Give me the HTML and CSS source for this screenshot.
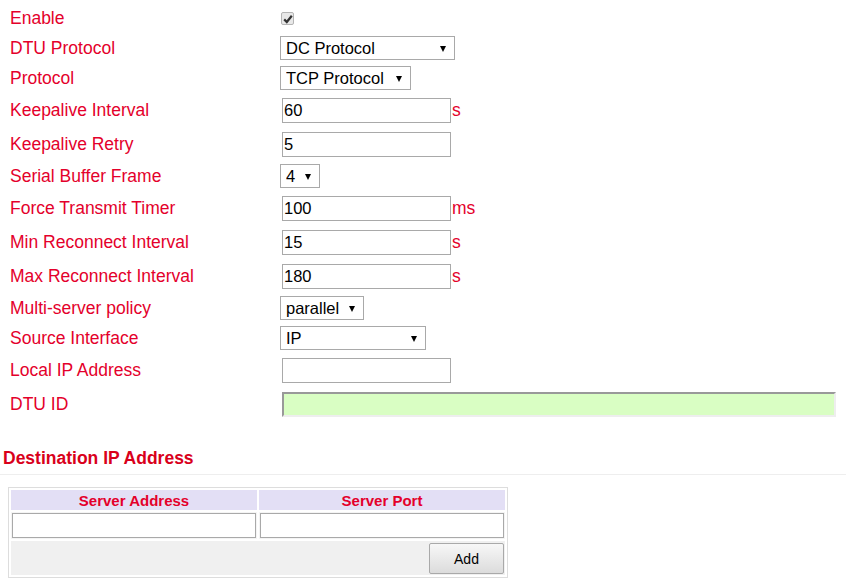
FILE: index.html
```html
<!DOCTYPE html>
<html lang="en">
<head>
  <meta charset="UTF-8" />
  <title>DTU Settings</title>
  <link rel="stylesheet" href="styles.css">
</head>
<body>
  <div class="form">
    <div class="row">
      <label>Enable</label>
      <span class="check">
        <svg width="10" height="10" viewBox="0 0 10 10"><path d="M1.2 5.4 L3.8 8 L8.8 1.8" fill="none" stroke="#333" stroke-width="2.2"/></svg>
      </span>
    </div>
    <div class="row">
      <label>DTU Protocol</label>
      <span class="select w-dtu"><select><option>DC Protocol</option></select></span>
    </div>
    <div class="row">
      <label>Protocol</label>
      <span class="select w-proto"><select><option>TCP Protocol</option></select></span>
    </div>
    <div class="row tall">
      <label>Keepalive Interval</label>
      <input type="text" value="60"><span class="unit">s</span>
    </div>
    <div class="row tall">
      <label>Keepalive Retry</label>
      <input type="text" value="5">
    </div>
    <div class="row">
      <label>Serial Buffer Frame</label>
      <span class="select w-frame"><select><option>4</option></select></span>
    </div>
    <div class="row tall">
      <label>Force Transmit Timer</label>
      <input type="text" value="100"><span class="unit">ms</span>
    </div>
    <div class="row tall">
      <label>Min Reconnect Interval</label>
      <input type="text" value="15"><span class="unit">s</span>
    </div>
    <div class="row tall">
      <label>Max Reconnect Interval</label>
      <input type="text" value="180"><span class="unit">s</span>
    </div>
    <div class="row">
      <label>Multi-server policy</label>
      <span class="select w-policy"><select><option>parallel</option></select></span>
    </div>
    <div class="row">
      <label>Source Interface</label>
      <span class="select w-iface"><select><option>IP</option></select></span>
    </div>
    <div class="row tall">
      <label>Local IP Address</label>
      <input type="text" value="">
    </div>
    <div class="row tall">
      <label>DTU ID</label>
      <input type="text" class="dtu-id" value="">
    </div>
  </div>

  <h3 class="section">Destination IP Address</h3>

  <table class="servers">
    <tr>
      <th>Server Address</th>
      <th>Server Port</th>
    </tr>
    <tr>
      <td><input type="text" class="cell-input"></td>
      <td><input type="text" class="cell-input"></td>
    </tr>
    <tr>
      <td colspan="2" class="actions"><button>Add</button></td>
    </tr>
  </table>
</body>
</html>
```

FILE: styles.css
```css
* {
  box-sizing: border-box;
}
body {
  margin: 0;
  font-family: 'Liberation Sans', Arial, sans-serif;
  font-size: 16px;
  background: #fff;
  color: #000;
}
.form {
  padding: 3px 0 0 10px;
}
.row {
  display: flex;
  align-items: center;
  height: 30px;
}
.row.tall {
  height: 34px;
}
.row label {
  width: 270px;
  flex: none;
  font-size: 17.5px;
  color: #e4002b;
}
.check {
  width: 13px;
  height: 13px;
  margin: 1px 0 0 1px;
  border: 1px solid #b4b4b4;
  border-radius: 2px;
  background: #e8e8e8;
  display: flex;
  align-items: center;
  justify-content: center;
}
.check svg {
  display: block;
}
.select {
  position: relative;
  display: inline-block;
  height: 24px;
}
.select select {
  appearance: none;
  -webkit-appearance: none;
  width: 100%;
  height: 24px;
  border: 1px solid #a9a9a9;
  border-radius: 0;
  background: #fff;
  font-family: inherit;
  font-size: 16.5px;
  color: #000;
  padding: 0 0 0 5px;
  margin: 0;
}
.select::after {
  content: "";
  position: absolute;
  right: 9px;
  top: 10px;
  border-left: 3px solid transparent;
  border-right: 3px solid transparent;
  border-top: 6px solid #000;
  pointer-events: none;
}
.w-dtu { width: 175px; }
.w-proto { width: 131px; }
.w-frame { width: 40px; }
.w-policy { width: 84px; }
.w-iface { width: 146px; }
.row input[type="text"] {
  width: 169px;
  height: 25px;
  margin: 0 0 0 2px;
  padding: 0 1px;
  border: 1px solid #a9a9a9;
  font-family: inherit;
  font-size: 16.5px;
  color: #000;
  outline: none;
}
.unit {
  color: #e4002b;
  font-size: 17.5px;
  margin-left: 1px;
}
.row input.dtu-id {
  width: 554px;
  border: 2px solid;
  border-color: #999 #eee #eee #999;
  background: #d9fec3;
}
.section {
  margin: 26px 0 0;
  padding: 0 0 5px 3px;
  font-size: 17.5px;
  line-height: 22px;
  color: #d9001b;
  border-bottom: 1px solid #eee;
}
.servers {
  margin: 12px 0 0 8px;
  width: 500px;
  border: 1px solid #ddd;
  border-spacing: 2px;
}
.servers th {
  height: 20px;
  padding: 0;
  background: #e3dff5;
  color: #e4002b;
  font-size: 15px;
  font-weight: bold;
  text-align: center;
}
.servers td {
  padding: 1px;
  background: #f4f4f4;
}
.cell-input {
  display: block;
  width: 100%;
  height: 25px;
  border: 1px solid #a9a9a9;
  font-family: inherit;
  font-size: 16px;
}
.servers td.actions {
  text-align: right;
  padding: 2px 1px 1px 2px;
  background: #f0f0f0;
}
.actions button {
  width: 75px;
  height: 31px;
  border: 1px solid #a9a9a9;
  border-radius: 2px;
  background: linear-gradient(#f7f7f7, #dcdcdc);
  font-family: inherit;
  font-size: 14px;
  color: #000;
  vertical-align: middle;
}
```
